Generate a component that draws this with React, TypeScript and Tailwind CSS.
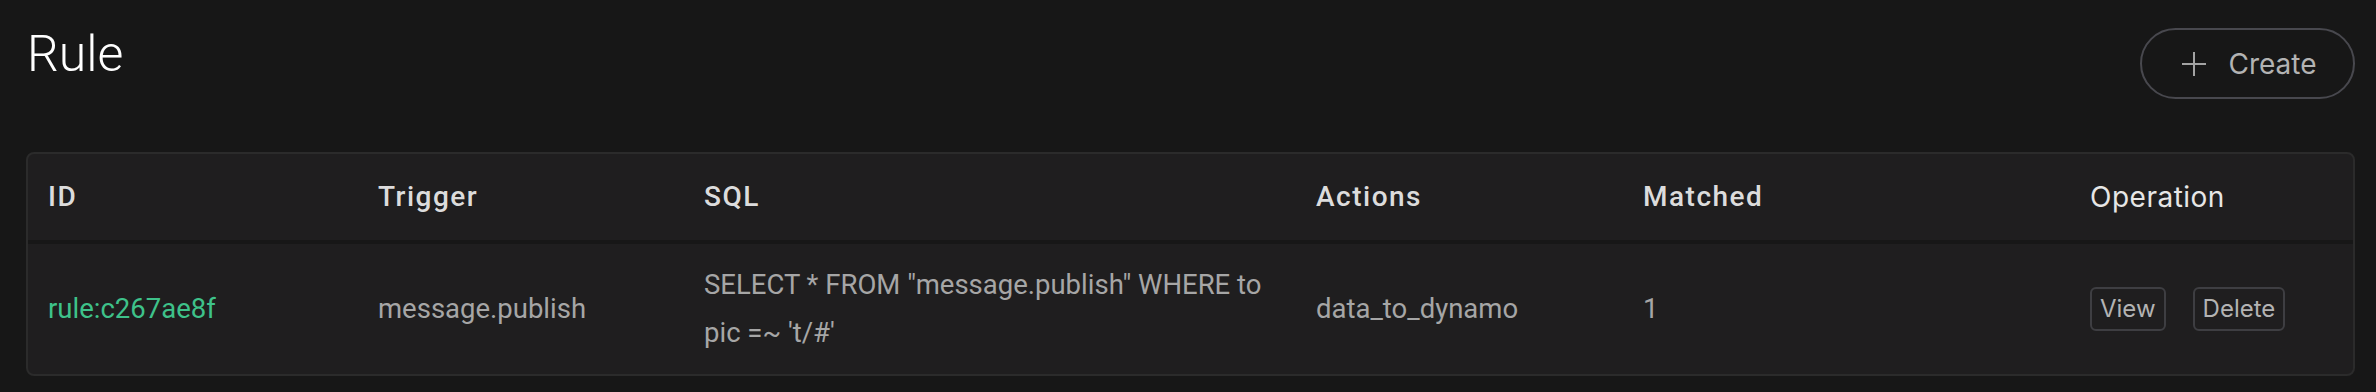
const cols = "grid grid-cols-[330px_326px_612px_327px_447px_1fr]";

const App = () => {
  return (
    <div className="min-h-screen bg-[#171717] pl-[26px] pr-[21px] pt-[24px] font-['Roboto',sans-serif]">
      <div className="flex justify-between items-start">
        <h1 className="text-[50px] leading-[60px] font-light text-white pl-[1px]">Rule</h1>
        <button className="mt-[4px] flex items-center justify-center gap-[22px] w-[215px] h-[71px] pl-[4px] rounded-full border-2 border-[#48484e] text-[#b3b3b3] font-['Inter',sans-serif] text-[28px]">
          <svg width="24" height="24" viewBox="0 0 24 24">
            <path d="M12 0v24M0 12h24" stroke="#a3a3a3" strokeWidth="2" />
          </svg>
          <span>Create</span>
        </button>
      </div>

      <div className="mt-[53px] border-2 border-[#2b2b2b] rounded-[8px] bg-[#1f1e1f] overflow-hidden">
        <div className={`${cols} h-[86px] items-center text-[28px] font-medium tracking-[1.5px] text-[#dcdcdc]`}>
          <div className="px-[20px]">ID</div>
          <div className="px-[20px]">Trigger</div>
          <div className="px-[20px]">SQL</div>
          <div className="px-[20px]">Actions</div>
          <div className="px-[20px]">Matched</div>
          <div className="px-[20px] font-['Inter',sans-serif] font-normal tracking-[0.5px] text-[#e6e6e6]">Operation</div>
        </div>
        <div className="h-[4px] bg-[#171717]" />
        <div className={`${cols} h-[130px] items-center text-[27.5px] text-[#a6a6a6]`}>
          <div className="px-[20px] text-[#3ec28a]">rule:c267ae8f</div>
          <div className="px-[20px]">message.publish</div>
          <div className="px-[20px] leading-[48px] break-all">
            SELECT * FROM "message.publish" WHERE topic =~ 't/#'
          </div>
          <div className="px-[20px]">data_to_dynamo</div>
          <div className="px-[20px]">1</div>
          <div className="px-[20px] flex items-center gap-[27px] font-['Inter',sans-serif] text-[24px] text-[#b3b3b3]">
            <button className="h-[44px] px-[8px] border-2 border-[#3e3e42] rounded-[6px]">View</button>
            <button className="h-[44px] px-[8px] border-2 border-[#3e3e42] rounded-[6px]">Delete</button>
          </div>
        </div>
      </div>
    </div>
  );
};

export default App;
